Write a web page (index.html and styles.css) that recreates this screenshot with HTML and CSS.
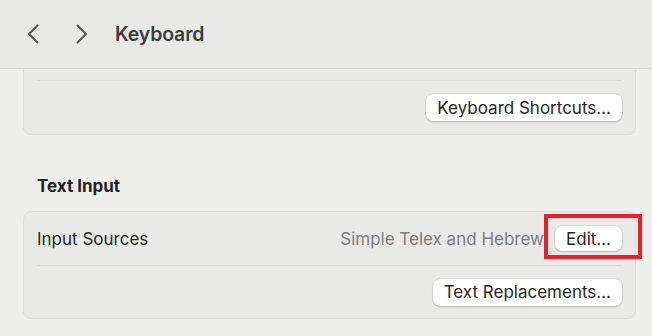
FILE: index.html
```html
<!DOCTYPE html>
<html>
<head>
<meta charset="utf-8">
<link rel="stylesheet" href="styles.css">
</head>
<body>
<header class="toolbar">
  <button class="nav" aria-label="Back">
    <svg width="12" height="20" viewBox="0 0 12 20"><path d="M10.5 1.5 L2 10 L10.5 18.5" fill="none" stroke="#555" stroke-width="2" stroke-linecap="round" stroke-linejoin="round"/></svg>
  </button>
  <button class="nav fwd" aria-label="Forward">
    <svg width="12" height="20" viewBox="0 0 12 20"><path d="M1.5 1.5 L10 10 L1.5 18.5" fill="none" stroke="#555" stroke-width="2" stroke-linecap="round" stroke-linejoin="round"/></svg>
  </button>
  <h1 class="title">Keyboard</h1>
</header>
<main class="content">
  <section class="card card-cut">
    <div class="row row-stub"></div>
    <div class="row row-end row-tall">
      <button class="btn">Keyboard Shortcuts…</button>
    </div>
  </section>

  <h2 class="section-title">Text Input</h2>
  <section class="card">
    <div class="row">
      <span class="label">Input Sources</span>
      <div class="value-group">
        <span class="value">Simple Telex and Hebrew</span>
        <span class="highlight-wrap">
          <button class="btn btn-small">Edit…</button>
          <span class="highlight"></span>
        </span>
      </div>
    </div>
    <div class="row row-end">
      <button class="btn">Text Replacements…</button>
    </div>
  </section>
</main>
</body>
</html>
```

FILE: styles.css
```css
* { box-sizing: border-box; }
html, body {
  margin: 0;
  padding: 0;
  background: #eeeeed;
  font-family: Inter, "Noto Sans", "Liberation Sans", sans-serif;
  color: #262626;
  overflow: hidden;
}
.toolbar {
  height: 69px;
  background: #e8e8e7;
  border-bottom: 1px solid #d3d3d2;
  display: flex;
  align-items: center;
  padding-left: 27px;
  box-shadow: 0 1px 2px rgba(0,0,0,0.04);
}
.nav {
  background: none;
  border: 0;
  padding: 0;
  width: 12px;
  height: 20px;
  display: flex;
  margin-right: 37px;
}
.nav.fwd { margin-right: 27px; }
.title {
  margin: 0;
  font-size: 19.5px;
  font-weight: 600;
  color: #3c3c3c;
  letter-spacing: -0.15px;
}
.content {
  padding: 0 16px 0 23px;
}
.card {
  background: #e9e9e8;
  border: 1px solid #dddddc;
  border-radius: 8px;
  padding: 0 13px;
}
.card-cut {
  border-top: 0;
  border-radius: 0 0 8px 8px;
}
.row {
  height: 54px;
  display: flex;
  align-items: center;
  justify-content: space-between;
  border-bottom: 1px solid #dadad9;
}
.row:last-child { border-bottom: 0; height: 52px; }
.row.row-tall { height: 53px; }
.row-stub { height: 12px; }
.row-end { justify-content: flex-end; }
.label { font-size: 17px; }
.section-title {
  margin: 39px 0 0 14px;
  padding-top: 2px;
  height: 37px;
  font-size: 17px;
  line-height: 20px;
  font-weight: 700;
  color: #222;
}
.value-group {
  display: flex;
  align-items: center;
  gap: 11px;
}
.value { color: #7d7d7d; font-size: 17px; }
.btn {
  font-family: inherit;
  font-size: 17px;
  color: #262626;
  background: #ffffff;
  border: 0;
  border-radius: 7px;
  height: 27px;
  padding: 0 11px;
  box-shadow: 0 0 0 0.5px rgba(0,0,0,0.12), 0 1px 2px rgba(0,0,0,0.18);
}
.btn-small { height: 25px; }
.highlight-wrap { position: relative; display: inline-flex; }
.highlight {
  position: absolute;
  left: -11px;
  right: -20px;
  top: -12px;
  bottom: -8px;
  border: 4px solid #e8202a;
  pointer-events: none;
}
```
